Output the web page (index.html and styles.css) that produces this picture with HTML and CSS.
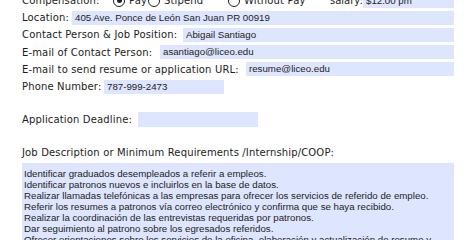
FILE: index.html
```html
<!DOCTYPE html>
<html lang="es">
<head>
<meta charset="utf-8">
<title>Job Posting Form</title>
<link rel="stylesheet" href="styles.css">
</head>
<body>
<div class="sheet">
    <div class="row comp">
        <span class="label w-comp">Compensation:</span>
        <span class="choice w-pay"><span class="radio checked"></span>Pay</span>
        <span class="choice w-stipend"><span class="radio"></span>Stipend</span>
        <span class="choice w-without"><span class="radio"></span>Without Pay</span>
        <span class="label w-salary">salary:</span>
        <span class="field grow">$12.00 pm</span>
    </div>
    <div class="row">
        <span class="label w-location">Location:</span>
        <span class="field grow">405 Ave. Ponce de León San Juan PR 00919</span>
    </div>
    <div class="row">
        <span class="label w-contact">Contact Person &amp; Job Position:</span>
        <span class="field grow">Abigail Santiago</span>
    </div>
    <div class="row">
        <span class="label w-email">E-mail of Contact Person:</span>
        <span class="field grow">asantiago@liceo.edu</span>
    </div>
    <div class="row">
        <span class="label w-resume">E-mail to send resume or application URL:</span>
        <span class="field grow">resume@liceo.edu</span>
    </div>
    <div class="row">
        <span class="label w-phone">Phone Number:</span>
        <span class="field short">787-999-2473</span>
    </div>
    <div class="row deadline">
        <span class="label w-deadline">Application Deadline:</span>
        <span class="field short date"></span>
    </div>
    <div class="row desc-title">
        <span class="label">Job Description or Minimum Requirements /Internship/COOP:</span>
    </div>
    <div class="field area">
        Identificar graduados desempleados a referir a empleos.<br>
        Identificar patronos nuevos e incluirlos en la base de datos.<br>
        Realizar llamadas telefónicas a las empresas para ofrecer los servicios de referido de empleo.<br>
        Referir los resumes a patronos vía correo electrónico y confirma que se haya recibido.<br>
        Realizar la coordinación de las entrevistas requeridas por patronos.<br>
        Dar seguimiento al patrono sobre los egresados referidos.<br>
        Ofrecer orientaciones sobre los servicios de la oficina, elaboración y actualización de resume y
    </div>
</div>
</body>
</html>
```

FILE: styles.css
```css
body {
    margin: 0;
    background-color: #ffffff;
    overflow: hidden;
}

.sheet {
    margin-top: -8px;
    padding: 0 20px 0 22px;
    width: 432px;
}

.row {
    display: flex;
    align-items: center;
    height: 17.2px;
}

.label {
    font-family: "DejaVu Sans", sans-serif;
    font-size: 10px;
    letter-spacing: 0.15px;
    color: #1c1c1c;
    white-space: nowrap;
    flex: none;
}

/* the fields sit where the printed sheet puts them, so each label gets its own width */
.w-comp { width: 91px; }
.w-salary { width: 33px; letter-spacing: 0; }
.w-location { width: 50px; }
.w-contact { width: 161px; }
.w-email { width: 138px; }
.w-resume { width: 224px; }
.w-phone { width: 82px; }
.w-deadline { width: 116px; }

.field {
    font-family: "Liberation Sans", Arial, sans-serif;
    font-size: 9.7px;
    color: #222222;
    background-color: #dee5ff;
    height: 14px;
    line-height: 14px;
    padding-left: 3px;
    white-space: nowrap;
    overflow: hidden;
}

.grow {
    flex: 1;
}

.short {
    width: 117px;
}

/* compensation radios */
.choice {
    display: flex;
    align-items: center;
    flex: none;
    font-family: "DejaVu Sans", sans-serif;
    font-size: 10px;
    letter-spacing: 0.15px;
    color: #1c1c1c;
}

.w-pay { width: 35px; }
.w-stipend { width: 80px; }
.w-without { width: 102px; }

.radio {
    width: 10px;
    height: 10px;
    border: 1px solid #222222;
    border-radius: 50%;
    margin-right: 4px;
    position: relative;
    flex: none;
}

.radio.checked::after {
    content: "";
    position: absolute;
    left: 2.5px;
    top: 2.5px;
    width: 5px;
    height: 5px;
    border-radius: 50%;
    background-color: #222222;
}

.deadline {
    margin-top: 16px;
}

.date {
    height: 15px;
}

.desc-title {
    margin-top: 16px;
}

.area {
    height: auto;
    line-height: 11px;
    padding: 5px 2px 6px 2px;
    font-size: 9.7px;
    margin-top: 1px;
}
```
